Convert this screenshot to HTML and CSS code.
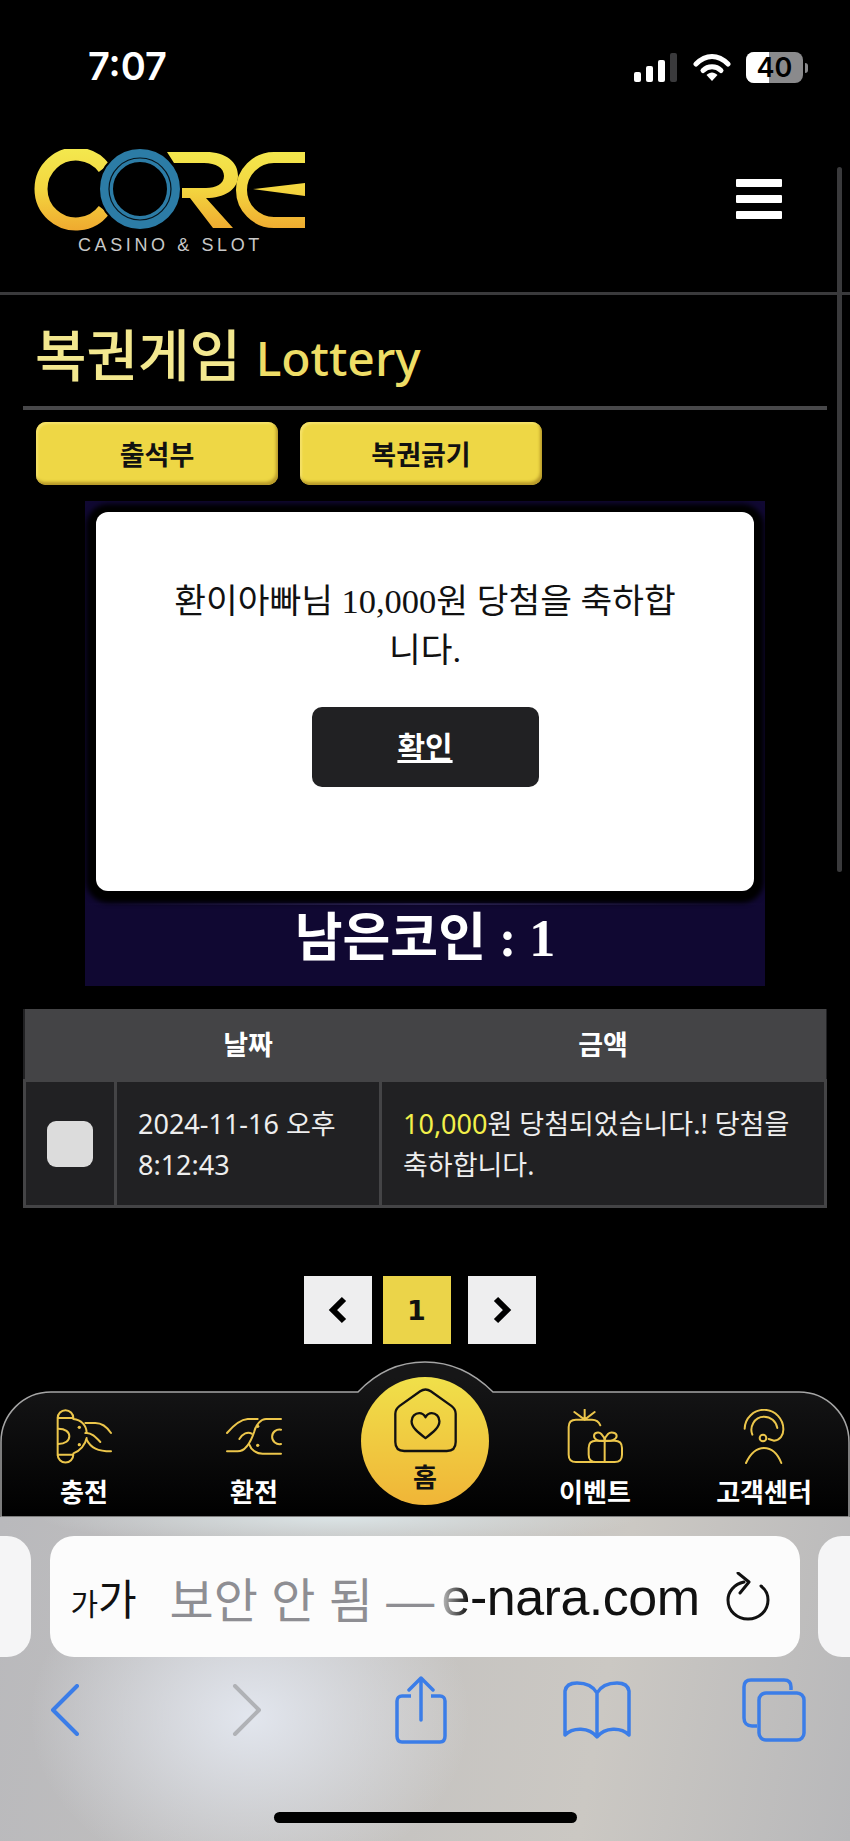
FILE: index.html
```html
<!DOCTYPE html>
<html lang="ko">
<head>
    <meta charset="UTF-8">
    <meta name="viewport" content="width=device-width, initial-scale=1.0">
    <title>복권게임 Lottery</title>
    <link rel="stylesheet" href="styles.css">
</head>
<body>
    <div class="page">
        <div class="status-bar">
            <span class="clock">7:07</span>
            <div class="status-icons">
                <svg class="signal" width="44" height="29" viewBox="0 0 44 29">
                    <rect x="0" y="19" width="7" height="10" rx="2" fill="#fff"/>
                    <rect x="12" y="13" width="7" height="16" rx="2" fill="#fff"/>
                    <rect x="24" y="7" width="7" height="22" rx="2" fill="#fff"/>
                    <rect x="36" y="0" width="7" height="29" rx="2" fill="#3a3a3c"/>
                </svg>
                <svg class="wifi" width="38" height="29" viewBox="0 0 38 29">
                    <path d="M3 11 C13 1 25 1 35 11" fill="none" stroke="#fff" stroke-width="5" stroke-linecap="round"/>
                    <path d="M10 17.500 C15 12.500 23 12.500 28 17.500" fill="none" stroke="#fff" stroke-width="5" stroke-linecap="round"/>
                    <path d="M13.500 22 C17 18.500 21 18.500 24.500 22 L19 28 Z" fill="#fff"/>
                </svg>
                <div class="battery">
                    <div class="battery-fill"></div>
                    <span class="battery-text">40</span>
                </div>
                <div class="battery-nub"></div>
            </div>
        </div>

        <div class="header">
            <div class="logo">
                <svg width="272" height="82" viewBox="0 0 272 82">
                    <defs>
                        <linearGradient id="logoGold" gradientUnits="userSpaceOnUse" x1="0" y1="0" x2="0" y2="82">
                            <stop offset="0" stop-color="#f3e84e"/>
                            <stop offset="0.5" stop-color="#f3d53f"/>
                            <stop offset="1" stop-color="#efa92f"/>
                        </linearGradient>
                    </defs>
                    <path d="M70 19 A35 35 0 1 0 70 61" fill="none" stroke="url(#logoGold)" stroke-width="13"/>
                    <path d="M133 3 H172 C192 3 204 13 204 27 C204 41 190 49 172 49 L199 79 H179 L156 49 H148 V39 H172 C182 39 190 35 190 27 C190 19 182 14 170 14 H140 Z" fill="url(#logoGold)"/>
                    <path d="M271 8.500 H240 A31 31 0 0 0 240 73.500 H271" fill="none" stroke="url(#logoGold)" stroke-width="11"/>
                    <path d="M219 40 L271 34 V47 Z" fill="url(#logoGold)"/>
                    <circle cx="106" cy="40" r="33.500" fill="none" stroke="#000" stroke-width="17"/>
                    <circle cx="106" cy="40" r="33.500" fill="none" stroke="#2c7ca6" stroke-width="13"/>
                    <circle cx="106" cy="40" r="31" fill="none" stroke="#06141c" stroke-width="1.200"/>
                </svg>
                <div class="logo-text">CASINO &amp; SLOT</div>
            </div>
            <div class="menu-btn">
                <span></span>
                <span></span>
                <span></span>
            </div>
        </div>

        <div class="title-row">
            <h1>복권게임 <span class="title-en">Lottery</span></h1>
        </div>

        <div class="tabs">
            <div class="tab">출석부</div>
            <div class="tab">복권긁기</div>
        </div>

        <div class="lottery-box">
            <div class="coin-left">남은코인 : 1</div>
            <div class="modal">
                <p class="modal-text">환이아빠님 10,000원 당첨을 축하합니다.</p>
                <div class="modal-btn">확인</div>
            </div>
        </div>

        <table class="result-table">
            <thead>
                <tr>
                    <th class="col-check"></th>
                    <th class="col-date">날짜</th>
                    <th>금액</th>
                </tr>
            </thead>
            <tbody>
                <tr>
                    <td><div class="checkbox"></div></td>
                    <td>2024-11-16 오후 8:12:43</td>
                    <td><span class="money">10,000</span>원 당첨되었습니다.! 당첨을 축하합니다.</td>
                </tr>
            </tbody>
        </table>

        <div class="pager">
            <div class="page-btn">
                <svg width="20" height="30" viewBox="0 0 20 30"><path d="M16 4 L5 15 L16 26" fill="none" stroke="#000" stroke-width="6"/></svg>
            </div>
            <div class="page-btn active">1</div>
            <div class="page-btn next">
                <svg width="20" height="30" viewBox="0 0 20 30"><path d="M4 4 L15 15 L4 26" fill="none" stroke="#000" stroke-width="6"/></svg>
            </div>
        </div>

        <div class="bottom-nav">
            <svg class="nav-shape" width="850" height="156" viewBox="0 0 850 156">
                <defs>
                    <linearGradient id="navFill" x1="0" y1="0" x2="0" y2="1">
                        <stop offset="0.1" stop-color="#161617"/>
                        <stop offset="1" stop-color="#000"/>
                    </linearGradient>
                </defs>
                <path d="M1 156 V81 A50 50 0 0 1 51 31 H358 C376 12 398 1 425 1 C452 1 474 12 493 31 H799 A50 50 0 0 1 849 81 V156 Z" fill="url(#navFill)" stroke="#a5a5a5" stroke-width="1.500"/>
            </svg>
            <div class="nav-items">
                <div class="nav-item">
                    <svg class="nav-icon" width="56" height="56" viewBox="170 213 168 168">
                        <path d="M222 240 H175 V350 H222 M175 240 A23 23 0 0 1 222 240 M175 350 A23 23 0 0 0 222 350"/>
                        <path d="M177 272 C198 272 210 282 210 295 C210 308 198 318 177 318"/>
                        <path d="M222 243 C245 245 262 262 262 285 M262 300 C258 320 242 340 222 346"/>
                        <path d="M258 255 H288 C308 255 325 270 335 285"/>
                        <path d="M258 285 C275 282 290 298 303 312"/>
                        <path d="M262 305 C275 330 295 340 335 340"/>
                        <circle class="dot" cx="240" cy="268" r="5"/>
                        <circle class="dot" cx="240" cy="320" r="5"/>
                    </svg>
                    <span>충전</span>
                </div>
                <div class="nav-item">
                    <svg class="nav-icon" width="56" height="56" viewBox="680 213 168 168">
                        <path d="M775 243 H745 C720 245 700 265 683 285"/>
                        <path d="M720 303 C730 287 745 280 757 287"/>
                        <path d="M683 340 H715 C740 340 755 310 765 280 C770 260 785 243 800 243 H845"/>
                        <path d="M845 347 H790 C770 347 755 335 750 320"/>
                        <path d="M845 275 A22 22 0 1 0 845 318"/>
                        <circle class="dot" cx="775" cy="265" r="5"/>
                        <circle class="dot" cx="775" cy="322" r="5"/>
                    </svg>
                    <span>환전</span>
                </div>
                <div class="nav-item home">
                    <svg class="home-icon" width="65" height="65" viewBox="127 112 194 196">
                        <path d="M133 190 C133 178 138 172 146 166 L208 122 C218 115 230 115 240 122 L302 166 C310 172 315 178 315 190 V275 C315 292 305 302 288 302 H160 C143 302 133 292 133 275 Z"/>
                        <path d="M224 263 C200 245 182 230 182 212 C182 198 193 188 205 188 C214 188 220 193 224 200 C228 193 234 188 243 188 C255 188 266 198 266 212 C266 230 248 245 224 263 Z"/>
                    </svg>
                    <span>홈</span>
                </div>
                <div class="nav-item">
                    <svg class="nav-icon" width="56" height="56" viewBox="425 213 168 168">
                        <path d="M525 262 C520 250 510 245 500 245 H452 C438 245 430 253 430 267 V350 C430 364 438 372 452 372 H568 C582 372 590 364 590 350 V330 C590 316 582 308 568 308 H512 C498 308 490 316 490 330 V350 C490 364 498 372 512 372"/>
                        <path d="M538 308 V372"/>
                        <path d="M538 308 C520 312 506 304 506 294 C506 284 520 280 528 288 C534 294 538 300 538 308 C538 300 542 294 548 288 C556 280 574 284 574 294 C574 304 556 312 538 308"/>
                        <path d="M478 245 V215 M478 245 L447 222 M478 245 L508 222"/>
                    </svg>
                    <span>이벤트</span>
                </div>
                <div class="nav-item">
                    <svg class="nav-icon" width="56" height="56" viewBox="936 213 168 168">
                        <path d="M962 272 A58 58 0 0 1 1078 275 C1078 292 1068 306 1050 308 L1034 303"/>
                        <path d="M985 290 C976 268 990 236 1020 236 C1040 236 1056 250 1060 270"/>
                        <circle cx="1017" cy="300" r="10"/>
                        <path d="M966 375 C980 345 1000 330 1020 330 C1040 330 1060 345 1072 375"/>
                    </svg>
                    <span>고객센터</span>
                </div>
            </div>
        </div>

        <div class="safari-bar">
            <div class="url-row">
                <div class="url-stub left"></div>
                <div class="url-pill">
                    <span class="aa"><span class="aa-small">가</span>가</span>
                    <span class="not-secure">보안 안 됨 —</span>
                    <span class="domain">e-nara.com</span>
                    <svg class="reload" width="44" height="50" viewBox="0 0 44 50">
                        <path d="M18 10 C8 12 2 20 2 28 C2 39 11 47 22 47 C33 47 42 39 42 28 C42 22 39 17 35 14" fill="none" stroke="#111" stroke-width="3" stroke-linecap="round"/>
                        <path d="M12 1 L23 10 L14 21" fill="none" stroke="#111" stroke-width="3" stroke-linecap="round" stroke-linejoin="round"/>
                    </svg>
                </div>
                <div class="url-stub right"></div>
            </div>
            <div class="tool-row">
                <svg width="30" height="52" viewBox="0 0 30 52"><path d="M27 2 L3 26 L27 50" fill="none" stroke="#3b7de8" stroke-width="4" stroke-linecap="round" stroke-linejoin="round"/></svg>
                <svg class="tool-forward" width="30" height="52" viewBox="0 0 30 52"><path d="M3 2 L27 26 L3 50" fill="none" stroke="#b0b2b6" stroke-width="4" stroke-linecap="round" stroke-linejoin="round"/></svg>
                <svg class="tool-share" width="52" height="68" viewBox="0 0 52 68">
                    <path d="M16 20 H7 C4 20 2 22 2 25 V60 C2 64 4 66 7 66 H45 C48 66 50 64 50 60 V25 C50 22 48 20 45 20 H36" fill="none" stroke="#3b7de8" stroke-width="3.500"/>
                    <path d="M26 44 V2 M14 14 L26 2 L38 14" fill="none" stroke="#3b7de8" stroke-width="3.500" stroke-linecap="round" stroke-linejoin="round"/>
                </svg>
                <svg class="tool-book" width="68" height="58" viewBox="0 0 68 58">
                    <path d="M34 12 C30 5 22 2 14 2 C8 2 3 4 2 10 V54 C10 46 26 46 34 56 C42 46 58 46 66 54 V10 C65 4 60 2 54 2 C46 2 38 5 34 12 Z M34 12 V56" fill="none" stroke="#3b7de8" stroke-width="3.500" stroke-linejoin="round"/>
                </svg>
                <svg class="tool-tabs" width="64" height="64" viewBox="0 0 64 64">
                    <path d="M49 12 V9 C49 4 46 2 42 2 H9 C5 2 2 4 2 9 V40 C2 45 5 48 10 48 H15" fill="none" stroke="#3b7de8" stroke-width="3.500"/>
                    <rect x="17" y="15" width="45" height="47" rx="7" fill="none" stroke="#3b7de8" stroke-width="3.500"/>
                </svg>
            </div>
            <div class="home-indicator"></div>
        </div>

        <div class="scrollbar"></div>
    </div>
</body>
</html>
```

FILE: styles.css
```css
* {
    box-sizing: border-box;
}

body {
    margin: 0;
    background-color: #000;
    font-family: "Noto Sans", "Noto Sans CJK KR", sans-serif;
    color: #fff;
}

.page {
    position: relative;
    width: 850px;
    height: 1841px;
    overflow: hidden;
    display: flex;
    flex-direction: column;
}

/* status bar */
.status-bar {
    height: 149px;
    padding: 44px 0 0 88px;
    display: flex;
    justify-content: space-between;
    align-items: flex-start;
}

.clock {
    font-family: Inter, sans-serif;
    font-size: 38px;
    font-weight: 600;
    line-height: 44px;
}

.status-icons {
    display: flex;
    align-items: center;
    gap: 15px;
    padding: 8px 42px 0 0;
}

.battery {
    position: relative;
    width: 57px;
    height: 31px;
    border-radius: 8px;
    background-color: #8a8a8c;
    overflow: hidden;
    display: flex;
    align-items: center;
    justify-content: center;
}

.battery-fill {
    position: absolute;
    left: 0;
    top: 0;
    bottom: 0;
    width: 23px;
    background-color: #fff;
}

.battery-text {
    position: relative;
    color: #000;
    font-family: Inter, sans-serif;
    font-size: 27px;
    font-weight: 600;
}

.battery-nub {
    margin-left: -13px;
    width: 3px;
    height: 10px;
    border-radius: 0 3px 3px 0;
    background-color: #8a8a8c;
}

/* header */
.header {
    height: 146px;
    padding: 0 68px 0 34px;
    display: flex;
    justify-content: space-between;
    align-items: flex-start;
    border-bottom: 3px solid #3a3a3c;
}

.logo svg {
    display: block;
}

.logo-text {
    margin-top: 5px;
    padding-left: 44px;
    font-family: "Liberation Sans", sans-serif;
    font-size: 18px;
    line-height: 18px;
    letter-spacing: 3.6px;
    color: #c9c9c9;
}

.menu-btn {
    margin-top: 30px;
    width: 46px;
    display: flex;
    flex-direction: column;
    gap: 8px;
}

.menu-btn span {
    height: 8px;
    border-radius: 1px;
    background-color: #fff;
}

/* page title */
.title-row {
    margin: 0 23px;
    height: 115px;
    border-bottom: 4px solid #48484a;
    padding: 24px 0 0 12px;
}

.title-row h1 {
    margin: 0;
    font-size: 56px;
    font-weight: 500;
    line-height: 70px;
    color: #f3e88f;
}

.title-en {
    font-size: 48px;
    color: #eedd66;
}

/* tabs */
.tabs {
    margin: 12px 36px 0;
    display: flex;
    gap: 22px;
}

.tab {
    width: 242px;
    height: 63px;
    border-radius: 10px;
    background-color: #eed745;
    box-shadow: inset -2px -3px 3px #b89a2a, inset 2px 2px 2px #f5e26a;
    color: #111;
    font-size: 27px;
    font-weight: 700;
    display: flex;
    align-items: center;
    justify-content: center;
}

/* lottery panel with the alert over it */
.lottery-box {
    position: relative;
    margin: 16px 85px 0;
    height: 485px;
    background:
        linear-gradient(90deg, transparent, #3a2f70 50%, transparent) 0 402px / 100% 2px no-repeat,
        #100832;
    display: flex;
    align-items: flex-end;
    justify-content: center;
}

.coin-left {
    padding-bottom: 16px;
    font-family: "Liberation Serif", "Noto Sans CJK KR", serif;
    font-size: 52px;
    font-weight: 700;
    line-height: 62px;
}

.modal {
    position: absolute;
    left: 11px;
    top: 11px;
    width: 658px;
    height: 379px;
    padding: 65px 66px 0;
    border-radius: 12px;
    background-color: #fff;
    box-shadow: 0 2px 5px 10px #000;
    color: #111;
    text-align: center;
}

.modal-text {
    margin: 0;
    font-family: "Liberation Serif", "Noto Sans CJK KR", serif;
    font-size: 34.500px;
    line-height: 49px;
    word-break: break-all;
}

.modal-btn {
    margin: 32px auto 0;
    width: 227px;
    height: 80px;
    padding-bottom: 5px;
    border-radius: 10px;
    background-color: #212123;
    color: #fff;
    font-size: 30px;
    font-weight: 700;
    text-decoration: underline;
    display: flex;
    align-items: center;
    justify-content: center;
}

/* history table */
.result-table {
    margin: 23px 23px 0;
    width: 804px;
    height: 199px;
    border-collapse: collapse;
    table-layout: fixed;
    background-color: #212123;
}

.result-table th {
    height: 71px;
    background-color: #444446;
    font-size: 27px;
    font-weight: 700;
}

.result-table td {
    border: 3px solid #444446;
    padding: 2px 21px 0;
    font-size: 27px;
    line-height: 41px;
    color: #eee;
}

.col-check {
    width: 91px;
}

.col-date {
    width: 265px;
}

.checkbox {
    width: 46px;
    height: 46px;
    border-radius: 9px;
    background-color: #dcdcdc;
}

.money {
    color: #f2f04a;
}

/* pagination */
.pager {
    margin-top: 68px;
    padding-right: 11px;
    display: flex;
    justify-content: center;
    gap: 11px;
}

.page-btn {
    width: 68px;
    height: 68px;
    background-color: #eeeeef;
    color: #111;
    font-family: "DejaVu Sans", sans-serif;
    font-size: 27px;
    font-weight: 700;
    display: flex;
    align-items: center;
    justify-content: center;
}

.page-btn.active {
    background-color: #ebd449;
}

.page-btn.next {
    margin-left: 6px;
}

/* bottom nav */
.bottom-nav {
    position: relative;
    margin-top: 17px;
    height: 156px;
}

.nav-shape {
    position: absolute;
    left: 0;
    top: 0;
}

.nav-items {
    position: relative;
    height: 156px;
    display: flex;
}

.nav-item {
    flex: 0 0 126px;
    padding-top: 48px;
    display: flex;
    flex-direction: column;
    align-items: center;
    font-size: 26px;
    font-weight: 700;
    line-height: 36px;
    white-space: nowrap;
}

.nav-item:nth-child(1) {
    flex: 0 0 168px;
}

.nav-item:nth-child(2) {
    flex: 0 0 172px;
}

.nav-item:nth-child(4) {
    flex: 0 0 212px;
}

.nav-item.home {
    flex: 0 0 128px;
    height: 128px;
    margin: 16px 0 0 21px;
    padding-top: 11px;
    border-radius: 50%;
    background: linear-gradient(#f0e04a, #f0b537);
    color: #111;
    line-height: 26px;
}

.home-icon {
    flex: none;
    margin-bottom: 11px;
    fill: none;
    stroke: #111;
    stroke-width: 7;
    stroke-linejoin: round;
}

.nav-icon {
    flex: none;
    margin-bottom: 9px;
    fill: none;
    stroke: #ecc64b;
    stroke-width: 6;
    stroke-linecap: round;
}

.nav-icon .dot {
    fill: #ecc64b;
    stroke: none;
}

/* safari chrome */
.safari-bar {
    flex: 1;
    display: flex;
    flex-direction: column;
    background:
        radial-gradient(ellipse 220px 170px at 250px 200px, #e2e6ee 0, rgba(226, 230, 238, 0) 100%),
        radial-gradient(ellipse 300px 30px at 340px 0, #dbe4e6 0, rgba(219, 228, 230, 0) 100%),
        linear-gradient(100deg, #b9b9bc, #cbc8c3 70%, #b8b8ba);
    padding-top: 19px;
}

.url-row {
    display: flex;
    justify-content: space-between;
    height: 121px;
}

.url-stub {
    width: 31px;
    background-color: #f5f5f6;
}

.url-stub.left {
    border-radius: 0 24px 24px 0;
}

.url-stub.right {
    width: 32px;
    border-radius: 24px 0 0 24px;
}

.url-pill {
    width: 750px;
    padding: 0 30px 0 21px;
    border-radius: 24px;
    background-color: #fcfcfc;
    display: flex;
    align-items: center;
    color: #111;
    font-family: "Liberation Sans", "Noto Sans CJK KR", sans-serif;
}

.aa {
    font-size: 42px;
    width: 99px;
    white-space: nowrap;
}

.aa-small {
    font-size: 30px;
}

.not-secure {
    font-size: 48px;
    color: #8e8e93;
    white-space: nowrap;
    width: 272px;
}

.domain {
    font-size: 52px;
    letter-spacing: -0.5px;
    white-space: nowrap;
    background: linear-gradient(90deg, #bbb, #111 26px);
    -webkit-background-clip: text;
    background-clip: text;
    color: transparent;
}

.reload {
    margin-left: auto;
}

.tool-row {
    margin-top: 19px;
    padding-left: 50px;
    height: 68px;
    display: flex;
    align-items: center;
}

.tool-forward {
    margin-left: 152px;
}

.tool-share {
    margin-left: 133px;
}

.tool-book {
    margin-left: 116px;
}

.tool-tabs {
    margin-left: 111px;
}

.home-indicator {
    margin: 68px auto 0;
    width: 303px;
    height: 11px;
    border-radius: 6px;
    background-color: #000;
}

.scrollbar {
    position: absolute;
    left: 837px;
    top: 167px;
    width: 5px;
    height: 705px;
    border-radius: 3px;
    background-color: #3a3a3c;
}
```
